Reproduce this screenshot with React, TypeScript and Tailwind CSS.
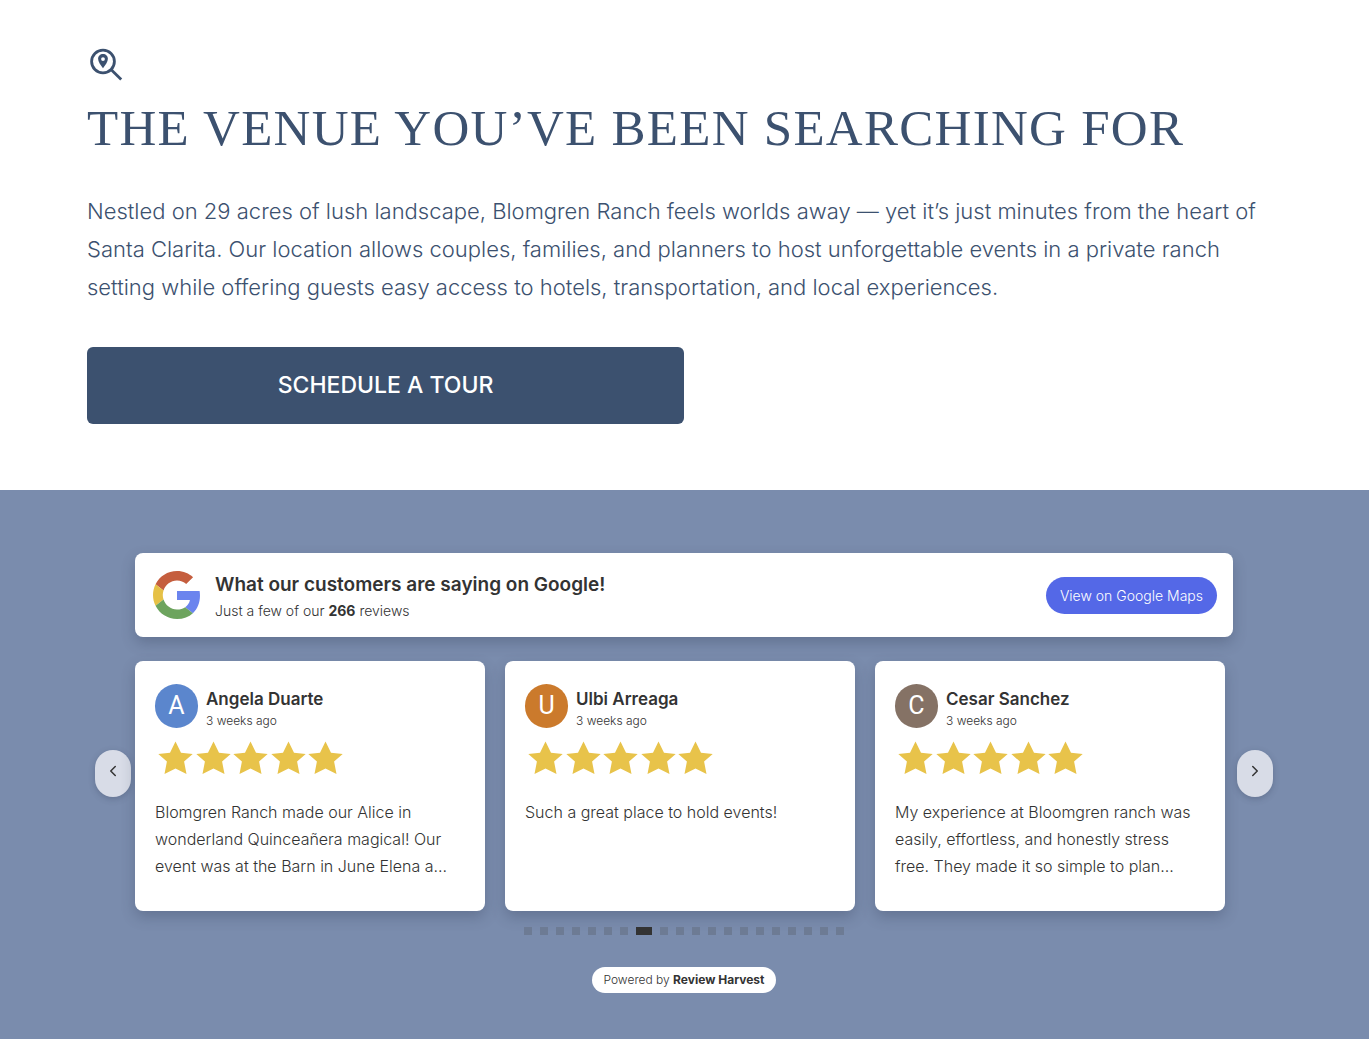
import { ChevronLeft, ChevronRight } from "lucide-react";

type Review = {
  name: string;
  initial: string;
  avatar: string;
  when: string;
  text: string;
};

const reviews: Review[] = [
  {
    name: "Angela Duarte",
    initial: "A",
    avatar: "bg-[#5b86cd]",
    when: "3 weeks ago",
    text: "Blomgren Ranch made our Alice in wonderland Quinceañera magical! Our event was at the Barn in June Elena a...",
  },
  {
    name: "Ulbi Arreaga",
    initial: "U",
    avatar: "bg-[#cb7a2c]",
    when: "3 weeks ago",
    text: "Such a great place to hold events!",
  },
  {
    name: "Cesar Sanchez",
    initial: "C",
    avatar: "bg-[#857265]",
    when: "3 weeks ago",
    text: "My experience at Bloomgren ranch was easily, effortless, and honestly stress free. They made it so simple to plan...",
  },
];

const DOT_COUNT = 20;
const ACTIVE_DOT = 7;

function SearchPinIcon() {
  return (
    <svg className="size-[38px]" viewBox="0 0 38 38" fill="none" aria-hidden="true">
      <circle cx="16" cy="16.5" r="11.4" stroke="currentColor" strokeWidth="2.8" />
      <path d="M24 24.500L34.200 34.500" stroke="currentColor" strokeWidth="2.800" />
      <path
        fill="currentColor"
        fillRule="evenodd"
        d="M16 9C13.200 9 11.100 11.100 11.100 13.800C11.100 16.800 13.600 20 16 23.200C18.400 20 20.900 16.800 20.900 13.800C20.900 11.100 18.800 9 16 9ZM16 12.200A1.900 1.900 0 1 1 16 16A1.900 1.900 0 1 1 16 12.200Z"
      />
    </svg>
  );
}

function GoogleLogo() {
  return (
    <svg className="size-12 shrink-0" viewBox="0 0 48 48" role="img" aria-label="Google">
      <path
        fill="#c55e3e"
        d="M24 9.500c3.540 0 6.710 1.220 9.210 3.600l6.850-6.850C35.900 2.380 30.470 0 24 0 14.620 0 6.510 5.380 2.560 13.220l7.980 6.190C12.430 13.720 17.740 9.500 24 9.500z"
      />
      <path
        fill="#6b84ee"
        d="M46.980 24.550c0-1.570-.15-3.090-.38-4.550H24v9.020h12.940c-.58 2.960-2.260 5.480-4.780 7.180l7.730 6c4.510-4.180 7.090-10.360 7.090-17.650z"
      />
      <path
        fill="#e6c146"
        d="M10.530 28.590c-.48-1.450-.76-2.990-.76-4.590s.27-3.140.76-4.590l-7.980-6.190C.92 16.460 0 20.120 0 24c0 3.880.92 7.540 2.560 10.780l7.970-6.190z"
      />
      <path
        fill="#6da45e"
        d="M24 48c6.480 0 11.930-2.130 15.890-5.810l-7.730-6c-2.150 1.450-4.920 2.300-8.160 2.300-6.260 0-11.570-4.220-13.470-9.910l-7.980 6.190C6.510 42.620 14.620 48 24 48z"
      />
    </svg>
  );
}

function Stars() {
  return (
    <div className="ml-[3px] mt-3 flex w-[185px] justify-between" role="img" aria-label="5 out of 5 stars">
      {[0, 1, 2, 3, 4].map((i) => (
        <svg key={i} className="h-[35px] w-[35px]" viewBox="0 0 35 35" fill="#e8c34a" aria-hidden="true">
          <path d="M17.500 1.500L23 12.800L34.700 13.900L26.100 21.600L28.500 34L17.500 28.500L6.500 34L8.900 21.600L.3 13.900L12 12.800Z" />
        </svg>
      ))}
    </div>
  );
}

function ReviewCard({ review }: { review: Review }) {
  return (
    <article className="min-h-[250px] flex-1 rounded-lg bg-white px-5 pb-5 pt-[23px] shadow-[0_6px_14px_rgba(50,60,85,0.3)]">
      <div className="flex h-11 items-start gap-2">
        <div
          className={`flex h-11 w-[43px] shrink-0 items-center justify-center rounded-full font-[Roboto] text-[25px] text-white ${review.avatar}`}
          aria-hidden="true"
        >
          {review.initial}
        </div>
        <div className="pt-[3px]">
          <h3 className="text-[17px] font-semibold leading-6">{review.name}</h3>
          <p className="text-xs font-light leading-5">{review.when}</p>
        </div>
      </div>
      <Stars />
      <p className="mt-6 text-base font-light leading-[27px]">{review.text}</p>
    </article>
  );
}

const arrowClass =
  "mb-[26px] flex h-[47px] w-9 shrink-0 items-start justify-center rounded-full bg-[#d8dce7] pt-3 text-[#333] shadow-[0_2px_6px_rgba(50,60,85,0.3)]";

export default function App() {
  return (
    <main className="bg-white">
      <section className="pb-[66px] pl-[87px] pr-[88px] pt-[45px] text-[#3c516f]">
        <SearchPinIcon />
        <h1 className="mt-[11px] font-['Liberation_Serif',serif] text-[51px] leading-[68px] tracking-wide">
          THE VENUE YOU’VE BEEN SEARCHING FOR
        </h1>
        <p className="mt-[30px] font-[Inter,sans-serif] text-[22px] font-light leading-[38px]">
          Nestled on 29 acres of lush landscape, Blomgren Ranch feels worlds away — yet it’s just minutes from the
          heart of Santa Clarita. Our location allows couples, families, and planners to host unforgettable events in a
          private ranch setting while offering guests easy access to hotels, transportation, and local experiences.
        </p>
        <a
          href="#tour"
          className="mt-[41px] flex h-[77px] w-1/2 items-center justify-center rounded-md bg-[#3c516f] font-[Inter,sans-serif] text-[23px] font-medium text-white"
        >
          SCHEDULE A TOUR
        </a>
      </section>

      <section className="bg-[#7a8cad] pb-[46px] pl-[95px] pr-24 pt-[63px] font-[Inter,sans-serif] text-[#333]">
        <header className="mx-10 flex min-h-[84px] items-center justify-between rounded-lg bg-white px-4 shadow-[0_6px_14px_rgba(50,60,85,0.3)]">
          <div className="ml-0.5 flex items-center gap-3.5">
            <GoogleLogo />
            <div className="pt-1">
              <h2 className="text-[19px] font-semibold leading-7">What our customers are saying on Google!</h2>
              <p className="text-sm font-light leading-6">
                Just a few of our <strong className="font-bold">266</strong> reviews
              </p>
            </div>
          </div>
          <a
            href="#maps"
            className="rounded-full bg-[#5468e7] px-3.5 py-2 text-sm font-light leading-[21px] text-white"
          >
            View on Google Maps
          </a>
        </header>

        <div className="mt-6 flex items-center gap-1">
          <button type="button" aria-label="Previous reviews" className={arrowClass}>
            <ChevronLeft size={18} strokeWidth={2} />
          </button>
          <div className="flex flex-1 items-stretch gap-5 pr-2">
            {reviews.map((review) => (
              <ReviewCard key={review.name} review={review} />
            ))}
          </div>
          <button type="button" aria-label="Next reviews" className={arrowClass}>
            <ChevronRight size={18} strokeWidth={2} />
          </button>
        </div>

        <div className="mt-4 flex justify-center gap-2">
          {Array.from({ length: DOT_COUNT }, (_, i) => (
            <button
              key={i}
              type="button"
              aria-label={`Go to review page ${i + 1}`}
              className={i === ACTIVE_DOT ? "h-2 w-4 bg-[#333]" : "size-2 bg-[#6d7b94]"}
            />
          ))}
        </div>

        <div className="mt-8 flex justify-center">
          <a href="#review-harvest" className="rounded-full bg-white px-3 py-[3px] text-xs font-light leading-5">
            Powered by <strong className="font-bold">Review Harvest</strong>
          </a>
        </div>
      </section>
    </main>
  );
}
